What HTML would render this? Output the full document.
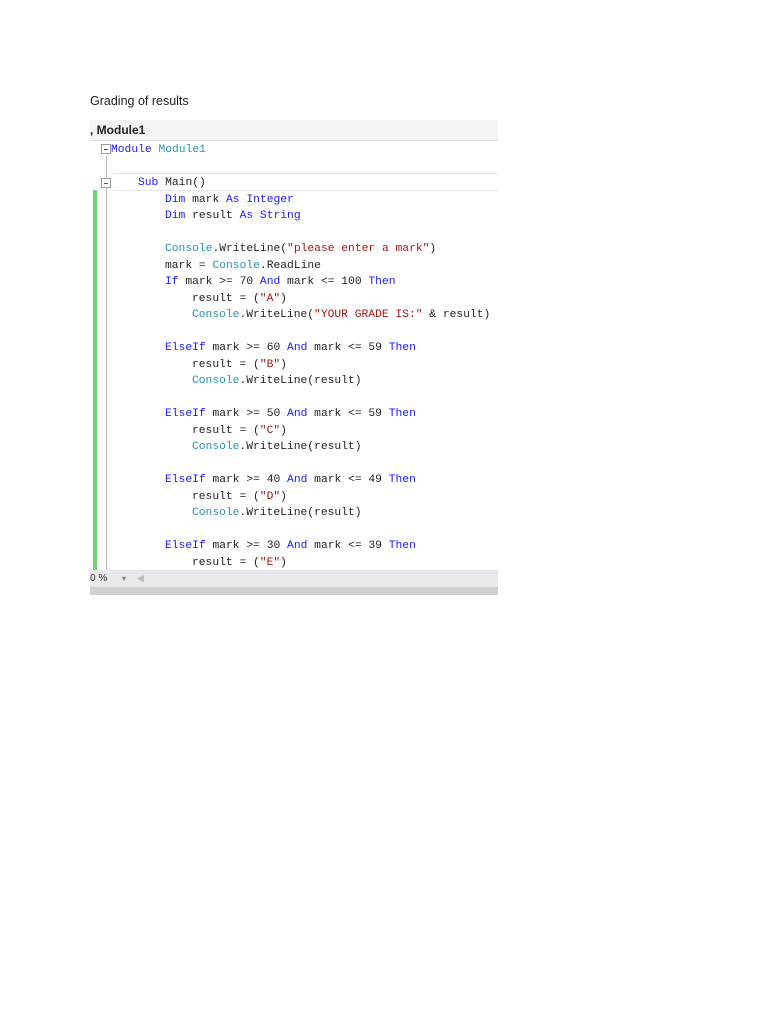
<!DOCTYPE html>
<html><head><meta charset="utf-8"><style>
body{margin:0;background:#fff;width:768px;height:1024px;position:relative;overflow:hidden;font-family:"Liberation Sans",sans-serif}
.t{position:absolute;left:90px;top:94px;font-size:12.5px;color:#222}
.shot{position:absolute;left:90px;top:120px;width:408px;height:480px;background:#fff;overflow:hidden}
.hdr{position:absolute;left:0;top:0;width:408px;height:20px;background:#f3f3f3;border-bottom:1px solid #ddd;font-size:12px;font-weight:bold;color:#222;line-height:20px}
.code{position:absolute;font-family:"Liberation Mono",monospace;font-size:11.3px;white-space:pre;color:#222;line-height:16.5px}
.k{color:#1a1aff}.c{color:#2b91af}.s{color:#a31515}
.ln{position:absolute;white-space:pre}
.green{position:absolute;left:3px;top:70px;width:4px;height:380px;background:#6fd66f}
.vl{position:absolute;left:16px;top:36px;width:1px;height:414px;background:#bbb}
.box{position:absolute;width:8px;height:8px;border:1px solid #999;background:#fff}
.box:after{content:"";position:absolute;left:2px;top:3.5px;width:4px;height:1px;background:#555}
.subbar{position:absolute;left:23px;top:53px;width:385px;height:16px;border-top:1px solid #e6e6e6;border-bottom:1px solid #e6e6e6}
.bot{position:absolute;left:0;top:450px;width:408px;height:17px;background:#e8e8ec;font-size:10px;line-height:17px;color:#333}
.bot2{position:absolute;left:0;top:467px;width:408px;height:8px;background:#cfcfd4}
</style></head><body>
<div class="t">Grading of results</div>
<div class="shot">
<div class="hdr">, Module1</div>
<div class="green"></div>
<div class="vl"></div>
<div class="subbar"></div>
<div class="box" style="left:11px;top:24px"></div>
<div class="box" style="left:11px;top:58px"></div>
<div class="code" style="left:0;top:2px">
<div class="ln" style="left:21px;top:20px"><span class="k">Module</span> <span class="c">Module1</span></div>
<div class="ln" style="left:48px;top:53px"><span class="k">Sub</span> Main()</div>
<div class="ln" style="left:75px;top:70px"><span class="k">Dim</span> mark <span class="k">As</span> <span class="k">Integer</span></div>
<div class="ln" style="left:75px;top:86px"><span class="k">Dim</span> result <span class="k">As</span> <span class="k">String</span></div>
<div class="ln" style="left:75px;top:119px"><span class="c">Console</span>.WriteLine(<span class="s">"please enter a mark"</span>)</div>
<div class="ln" style="left:75px;top:136px">mark = <span class="c">Console</span>.ReadLine</div>
<div class="ln" style="left:75px;top:152px"><span class="k">If</span> mark &gt;= 70 <span class="k">And</span> mark &lt;= 100 <span class="k">Then</span></div>
<div class="ln" style="left:102px;top:169px">result = (<span class="s">"A"</span>)</div>
<div class="ln" style="left:102px;top:185px"><span class="c">Console</span>.WriteLine(<span class="s">"YOUR GRADE IS:"</span> &amp; result)</div>
<div class="ln" style="left:75px;top:218px"><span class="k">ElseIf</span> mark &gt;= 60 <span class="k">And</span> mark &lt;= 59 <span class="k">Then</span></div>
<div class="ln" style="left:102px;top:235px">result = (<span class="s">"B"</span>)</div>
<div class="ln" style="left:102px;top:251px"><span class="c">Console</span>.WriteLine(result)</div>
<div class="ln" style="left:75px;top:284px"><span class="k">ElseIf</span> mark &gt;= 50 <span class="k">And</span> mark &lt;= 59 <span class="k">Then</span></div>
<div class="ln" style="left:102px;top:301px">result = (<span class="s">"C"</span>)</div>
<div class="ln" style="left:102px;top:317px"><span class="c">Console</span>.WriteLine(result)</div>
<div class="ln" style="left:75px;top:350px"><span class="k">ElseIf</span> mark &gt;= 40 <span class="k">And</span> mark &lt;= 49 <span class="k">Then</span></div>
<div class="ln" style="left:102px;top:367px">result = (<span class="s">"D"</span>)</div>
<div class="ln" style="left:102px;top:383px"><span class="c">Console</span>.WriteLine(result)</div>
<div class="ln" style="left:75px;top:416px"><span class="k">ElseIf</span> mark &gt;= 30 <span class="k">And</span> mark &lt;= 39 <span class="k">Then</span></div>
<div class="ln" style="left:102px;top:433px">result = (<span class="s">"E"</span>)</div>
</div>
<div class="bot"><span style="position:absolute;left:0">0 %</span><span style="position:absolute;left:32px;font-size:8px;color:#777">▾</span><span style="position:absolute;left:47px;font-size:9px;color:#bbb">◀</span></div>
<div class="bot2"></div>
</div>
</body></html>
